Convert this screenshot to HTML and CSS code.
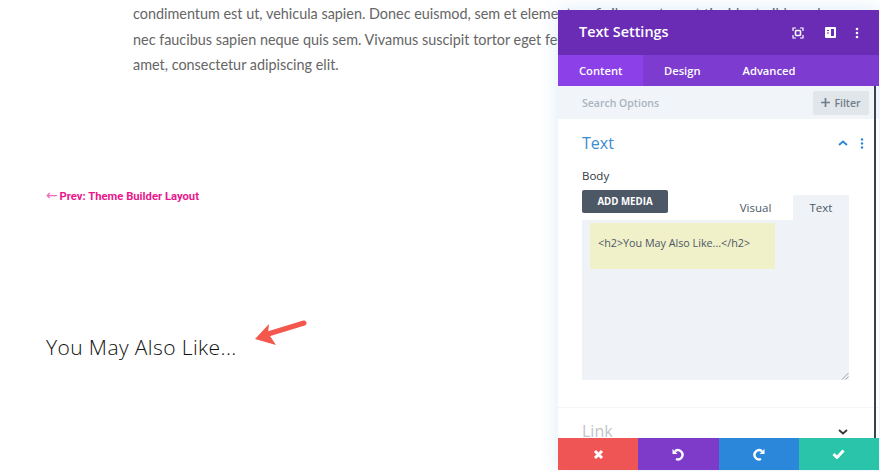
FILE: index.html
```html
<!DOCTYPE html>
<html lang="en">
<head>
<meta charset="utf-8">
<title>Text Settings</title>
<link rel="stylesheet" href="styles.css">
</head>
<body>
<main class="page">
  <div class="copy">
    <p>condimentum est ut, vehicula sapien. Donec euismod, sem et elementum finibus, ante erat tincidunt nibh, sed</p>
    <p>nec faucibus sapien neque quis sem. Vivamus suscipit tortor eget felis</p>
    <p>amet, consectetur adipiscing elit.</p>
  </div>
  <a class="prev"><span class="prev-arrow">←</span> Prev: Theme Builder Layout</a>
  <div class="heading-row">
    <h2 class="also">You May Also Like...</h2>
    <svg class="arrow" width="56" height="28" viewBox="0 0 56 28"><path d="M50 4 L14 15" stroke="#f4574c" stroke-width="5" stroke-linecap="round" fill="none"/><path d="M1 20 L15 5 L14 14 L22 26 Z" fill="#f4574c"/></svg>
  </div>
</main>

<aside class="panel">
  <header class="panel-head">
    <h1 class="panel-title">Text Settings</h1>
    <div class="head-icons">
      <svg width="12" height="12" viewBox="0 0 12 12"><path d="M1 4V1h3M8 1h3v3M11 8v3H8M4 11H1V8" fill="none" stroke="#fff" stroke-width="1.2"/><rect x="3.5" y="3.5" width="5" height="5" rx="1" fill="none" stroke="#fff" stroke-width="1.6"/></svg>
      <svg width="11" height="11" viewBox="0 0 11 11"><path fill-rule="evenodd" d="M1 0h9a1 1 0 0 1 1 1v9a1 1 0 0 1-1 1H1a1 1 0 0 1-1-1V1a1 1 0 0 1 1-1zM6 2v7h3V2zM2 3v1h2V3zM2 5.500v1h2v-1z" fill="#fff"/></svg>
      <svg class="head-dots" width="4" height="12" viewBox="0 0 4 12"><circle cx="2" cy="2" r="1.300" fill="#fff"/><circle cx="2" cy="6" r="1.300" fill="#fff"/><circle cx="2" cy="10" r="1.300" fill="#fff"/></svg>
    </div>
  </header>
  <nav class="tabs">
    <a class="tab tab-active">Content</a>
    <a class="tab tab-design">Design</a>
    <a class="tab tab-advanced">Advanced</a>
  </nav>
  <div class="search">
    <span class="search-label">Search Options</span>
    <span class="filter"><svg class="filter-plus" width="9" height="9" viewBox="0 0 9 9"><path d="M4.500 0v9M0 4.500h9" stroke="#6f7d8a" stroke-width="1.700" fill="none"/></svg>Filter</span>
  </div>
  <div class="body">
    <section class="group">
      <div class="group-head">
        <h3 class="group-title">Text</h3>
        <svg class="chev" width="10" height="6" viewBox="0 0 10 6"><path d="M1 5l4-3.500L9 5" fill="none" stroke="#2b87da" stroke-width="1.800"/></svg>
        <svg class="dots" width="4" height="11" viewBox="0 0 4 11"><circle cx="2" cy="1.500" r="1.200" fill="#2b87da"/><circle cx="2" cy="5.500" r="1.200" fill="#2b87da"/><circle cx="2" cy="9.500" r="1.200" fill="#2b87da"/></svg>
      </div>
      <div class="field-label">Body</div>
      <div class="editor-top">
        <span class="add-media">ADD MEDIA</span>
        <div class="modes">
          <span class="mode mode-visual">Visual</span>
          <span class="mode mode-text">Text</span>
        </div>
      </div>
      <div class="editor">
        <div class="code">&lt;h2&gt;You May Also Like...&lt;/h2&gt;</div>
        <svg class="grip" width="8" height="8" viewBox="0 0 8 8"><path d="M1 7.500L7.500 1M4.500 7.500L7.500 4.500" stroke="#8a8f94" stroke-width="0.800" fill="none"/></svg>
      </div>
    </section>
    <section class="group-link">
      <h3 class="link-title">Link</h3>
      <svg class="link-chev" width="10" height="6" viewBox="0 0 10 6"><path d="M1 1l4 3.500L9 1" fill="none" stroke="#32373c" stroke-width="1.800"/></svg>
    </section>
  </div>
  <div class="scrollbar"></div>
  <footer class="actions">
    <span class="act act-red"><svg width="11" height="11" viewBox="0 0 11 11"><path d="M2 2l7 7M9 2l-7 7" stroke="#fff" stroke-width="3" fill="none"/></svg></span>
    <span class="act act-purple"><svg width="13" height="13" viewBox="0 0 13 13"><path d="M3 3.200A4.600 4.600 0 1 1 4 11" fill="none" stroke="#fff" stroke-width="2.400"/><path d="M0.500 1v5h5z" fill="#fff"/></svg></span>
    <span class="act act-blue"><svg width="13" height="13" viewBox="0 0 13 13"><path d="M10 3.200A4.600 4.600 0 1 0 9 11" fill="none" stroke="#fff" stroke-width="2.400"/><path d="M12.500 1v5h-5z" fill="#fff"/></svg></span>
    <span class="act act-green"><svg width="13" height="10" viewBox="0 0 13 10"><path d="M1.500 5l3.500 3.500L11.500 1.500" stroke="#fff" stroke-width="3" fill="none"/></svg></span>
  </footer>
</aside>
</body>
</html>
```
FILE: styles.css
```css
* { box-sizing: border-box; }
html, body { margin: 0; height: 100%; overflow: hidden; background: #fff; }
.page { padding: 1px 0 0 46px; font-family: "Open Sans", sans-serif; }
.copy { margin-left: 87px; font: 14.400px/25.700px Lato, sans-serif; color: #666; white-space: nowrap; }
.copy p { margin: 0; }
.prev { display: block; margin-top: 109px; font: 700 11.250px/16px Roboto, sans-serif; color: #e9168c; }
.prev-arrow { font: 400 14px/16px "DejaVu Sans", sans-serif; color: #ee6bb3; margin-right: -1px; }
.heading-row { display: flex; align-items: flex-start; margin-top: 112px; }
.also { margin: 15px 0 0; font: 300 21px/30px "Open Sans", sans-serif; letter-spacing: 0.400px; color: #111; }
.arrow { margin: 2px 0 0 17px; }

.panel { position: absolute; left: 558px; top: 10px; width: 321px; height: 460px; background: #fff; font-family: "Open Sans", sans-serif; box-shadow: 0 0 18px rgba(43,135,218,.16); display: flex; flex-direction: column; overflow: hidden; }
.panel-head { height: 45px; flex: none; background: #6a2cb5; display: flex; align-items: center; justify-content: space-between; padding: 0 20px 2px 21px; }
.panel-title { margin: 0; font: 600 14.400px/20px "Open Sans", sans-serif; color: #fff; }
.head-icons { display: flex; align-items: center; gap: 21px; padding-top: 2px; }
.head-dots { margin-left: -2px; }
.tabs { height: 31px; flex: none; background: #7d3bcf; display: flex; }
.tab { font: 600 11.200px/31px "Open Sans", sans-serif; color: #fff; }
.tab-active { width: 85px; padding-left: 21px; background: #8c40e8; }
.tab-design { margin-left: 21px; }
.tab-advanced { margin-left: 42px; }
.search { height: 33px; flex: none; background: #f1f5f9; display: flex; align-items: center; justify-content: space-between; padding: 0 10px 0 24px; }
.search-label { font: 600 10.500px/14px "Open Sans", sans-serif; color: #a9b3bf; }
.filter { display: flex; align-items: center; justify-content: center; gap: 4px; width: 56px; height: 24px; background: #e1e6ea; border-radius: 2px; font: 600 10.500px/24px "Open Sans", sans-serif; color: #6f7d8a; }
.body { flex: 1; min-height: 0; overflow: hidden; }
.group { padding: 14px 30px 27px 24px; border-bottom: 1px solid #f4f5f6; }
.group-head { display: flex; align-items: center; height: 20px; }
.group-title { margin: 0; flex: 1; font: 400 16px/20px "Open Sans", sans-serif; color: #3d8bd0; }
.chev { margin-right: 12px; }
.dots { margin-right: -15px; }
.field-label { margin-top: 15px; font: 400 11.500px/16px "Open Sans", sans-serif; color: #32373c; }
.editor-top { display: flex; justify-content: space-between; height: 30px; margin-top: 6px; }
.add-media { width: 86px; height: 23px; background: #4c5866; border-radius: 2px; font: 700 9.700px/23px "Open Sans", sans-serif; color: #fff; text-align: center; }
.modes { display: flex; align-self: flex-end; }
.mode { height: 25px; font: 400 11.500px/26px "Open Sans", sans-serif; color: #4c5866; text-align: center; }
.mode-visual { width: 67px; background: #fff; margin-right: 4px; }
.mode-text { width: 56px; background: #eff3f8; }
.editor { position: relative; height: 160px; background: #eff3f8; padding: 3px 0 0 8px; }
.code { width: 185px; height: 46px; background: #f0f0c9; padding: 13px 0 0 8px; font: 400 10.750px/15px "Open Sans", sans-serif; color: #4c5866; }
.grip { position: absolute; right: 0; bottom: 0; }
.group-link { display: flex; align-items: center; justify-content: space-between; padding: 12px 31px 0 24px; }
.link-chev { margin: 2px 0 0 0; }
.link-title { margin: 0; font: 400 16px/22px "Open Sans", sans-serif; color: #bfc4ca; }
.scrollbar { position: absolute; right: 3px; top: 76px; bottom: 32px; width: 2px; background: #39424e; }
.actions { position: absolute; left: 0; right: 0; bottom: 0; height: 32px; display: flex; }
.act { flex: 1; display: flex; align-items: center; justify-content: center; }
.act-red { background: #ef5555; }
.act-purple { background: #7e3bc9; }
.act-blue { background: #2b87da; }
.act-green { background: #29c4a9; }
```
